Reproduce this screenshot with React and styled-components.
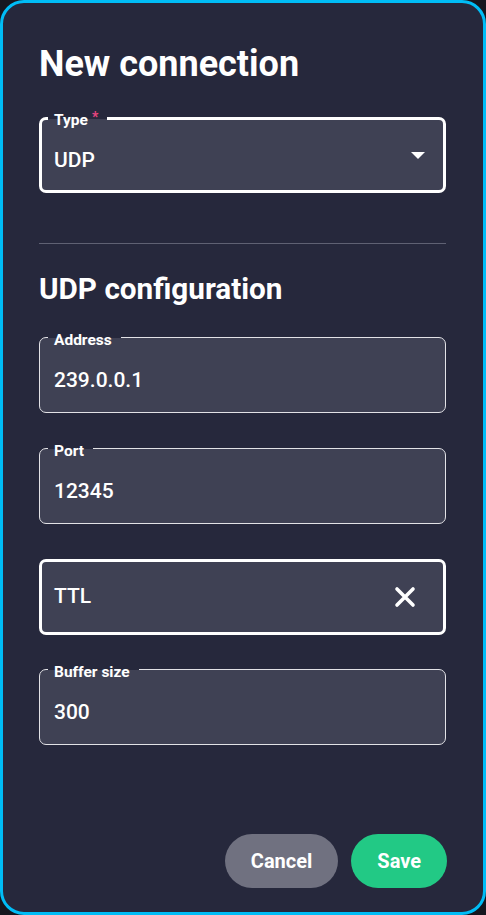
import React from "react";
import styled, { createGlobalStyle } from "styled-components";

const PANEL = "#26283c";
const FIELD = "#3f4154";

const Global = createGlobalStyle`
  html, body { margin: 0; padding: 0; background: #16171f; }
  body { font-family: Roboto, "Liberation Sans", sans-serif; }
  * { box-sizing: border-box; }
`;

const Panel = styled.div`
  width: 486px;
  height: 915px;
  background: ${PANEL};
  border: 3px solid #00bdf6;
  border-radius: 24px;
  padding: 43px 37px 24px 36px;
  display: flex;
  flex-direction: column;
  color: #fff;
`;

const Title = styled.h1`
  margin: 0;
  font-size: 36px;
  line-height: 1;
  font-weight: 700;
  color: #fff;
`;

const SubTitle = styled.h2`
  margin: 30px 0 0;
  font-size: 29.7px;
  line-height: 1;
  font-weight: 700;
  color: #fff;
`;

const Divider = styled.hr`
  margin: 50px 0 0;
  border: 0;
  height: 1px;
  background: #5f6173;
`;

const Field = styled.div`
  position: relative;
  height: 76px;
  margin-top: ${(p) => p.$mt}px;
  background: ${FIELD};
  border: ${(p) => (p.$strong ? "3px solid #ffffff" : "1px solid #e2e2e6")};
  border-radius: 7px;
  padding: 0 ${(p) => (p.$strong ? 18 : 20)}px 0 ${(p) => (p.$strong ? 12 : 14)}px;
  display: flex;
  align-items: center;
  justify-content: space-between;
`;

const Label = styled.span`
  position: absolute;
  top: ${(p) => (p.$strong ? -8 : -6)}px;
  left: ${(p) => (p.$strong ? 6 : 8)}px;
  padding: 0 9px 0 6px;
  font-size: 15.5px;
  line-height: 17px;
  font-weight: 700;
  color: #fff;
  background: linear-gradient(
    to bottom,
    ${PANEL} 0,
    ${PANEL} ${(p) => (p.$strong ? 6.5 : 5.5)}px,
    ${FIELD} ${(p) => (p.$strong ? 6.5 : 5.5)}px,
    ${FIELD} 100%
  );
`;

const Star = styled.span`
  color: #e8457f;
  margin-left: 4px;
  font-size: 14px;
  position: relative;
  top: -3px;
`;

const Value = styled.span`
  font-size: 21px;
  line-height: 1;
  font-weight: 500;
  color: #fff;
  margin-top: ${(p) => (p.$labeled ? 11 : 0)}px;
`;

const Caret = styled.span`
  width: 0;
  height: 0;
  border-left: 7px solid transparent;
  border-right: 7px solid transparent;
  border-top: 7px solid #fff;
`;

const ClearIcon = styled.svg`
  width: 22px;
  height: 22px;
  margin-right: 9px;
`;

const Actions = styled.div`
  margin-top: auto;
  margin-right: -1px;
  display: flex;
  justify-content: flex-end;
  gap: 13px;
`;

const Button = styled.button`
  height: 54px;
  border: 0;
  border-radius: 27px;
  padding: 0 26px;
  font-family: Roboto, "Liberation Sans", sans-serif;
  font-size: 20px;
  font-weight: 700;
  color: #fff;
  background: ${(p) => (p.$primary ? "#22c985" : "#707180")};
  cursor: pointer;
`;

export default function App() {
  return (
    <>
      <Global />
      <Panel>
        <Title>New connection</Title>
        <Field $strong $mt={35}>
          <Label $strong>
            Type<Star>*</Star>
          </Label>
          <Value $labeled>UDP</Value>
          <Caret />
        </Field>
        <Divider />
        <SubTitle>UDP configuration</SubTitle>
        <Field $mt={33}>
          <Label>Address</Label>
          <Value $labeled>239.0.0.1</Value>
        </Field>
        <Field $mt={35}>
          <Label>Port</Label>
          <Value $labeled>12345</Value>
        </Field>
        <Field $strong $mt={35}>
          <Value>TTL</Value>
          <ClearIcon viewBox="0 0 22 22">
            <path d="M3 3 L19 19 M19 3 L3 19" stroke="#fff" strokeWidth="3.6" strokeLinecap="round" fill="none" />
          </ClearIcon>
        </Field>
        <Field $mt={34}>
          <Label>Buffer size</Label>
          <Value $labeled>300</Value>
        </Field>
        <Actions>
          <Button>Cancel</Button>
          <Button $primary>Save</Button>
        </Actions>
      </Panel>
    </>
  );
}
